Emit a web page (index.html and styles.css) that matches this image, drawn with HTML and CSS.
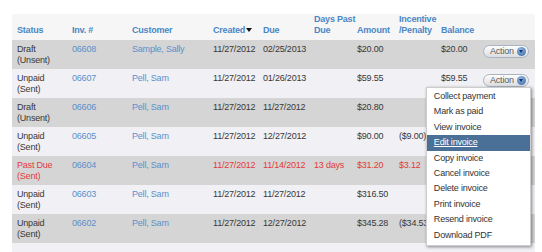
FILE: index.html
```html
<!DOCTYPE html>
<html lang="en">
<head>
    <meta charset="UTF-8">
    <meta name="viewport" content="width=device-width, initial-scale=1.0">
    <title>Invoices</title>
    <link rel="stylesheet" href="styles.css">
</head>
<body>
    <div class="page">
        <table class="invoices">
            <colgroup>
                <col style="width:55px"><col style="width:60px"><col style="width:81px"><col style="width:50px"><col style="width:51px">
                <col style="width:43px"><col style="width:42px"><col style="width:42px"><col style="width:44px"><col style="width:55px">
            </colgroup>
            <thead>
                <tr>
                    <th>Status</th>
                    <th>Inv. #</th>
                    <th>Customer</th>
                    <th>Created<span class="sort-down"></span></th>
                    <th>Due</th>
                    <th>Days Past<br>Due</th>
                    <th>Amount</th>
                    <th>Incentive<br>/Penalty</th>
                    <th>Balance</th>
                    <th></th>
                </tr>
            </thead>
            <tbody>
                <tr class="dark">
                    <td>Draft<br>(Unsent)</td>
                    <td><a href="#">06608</a></td>
                    <td><a href="#">Sample, Sally</a></td>
                    <td>11/27/2012</td>
                    <td>02/25/2013</td>
                    <td></td>
                    <td>$20.00</td>
                    <td></td>
                    <td>$20.00</td>
                    <td><span class="action"><span class="action-btn">Action <i class="caret"></i></span></span></td>
                </tr>
                <tr>
                    <td>Unpaid<br>(Sent)</td>
                    <td><a href="#">06607</a></td>
                    <td><a href="#">Pell, Sam</a></td>
                    <td>11/27/2012</td>
                    <td>01/26/2013</td>
                    <td></td>
                    <td>$59.55</td>
                    <td></td>
                    <td>$59.55</td>
                    <td>
                        <span class="action">
                            <span class="action-btn">Action <i class="caret"></i></span>
                            <ul class="menu">
                                <li><a href="#">Collect payment</a></li>
                                <li><a href="#">Mark as paid</a></li>
                                <li><a href="#">View invoice</a></li>
                                <li class="active"><a href="#">Edit invoice</a></li>
                                <li><a href="#">Copy invoice</a></li>
                                <li><a href="#">Cancel invoice</a></li>
                                <li><a href="#">Delete invoice</a></li>
                                <li><a href="#">Print invoice</a></li>
                                <li><a href="#">Resend invoice</a></li>
                                <li><a href="#">Download PDF</a></li>
                            </ul>
                        </span>
                    </td>
                </tr>
                <tr class="dark">
                    <td>Draft<br>(Unsent)</td>
                    <td><a href="#">06606</a></td>
                    <td><a href="#">Pell, Sam</a></td>
                    <td>11/27/2012</td>
                    <td>11/27/2012</td>
                    <td></td>
                    <td>$20.80</td>
                    <td></td>
                    <td></td>
                    <td></td>
                </tr>
                <tr>
                    <td>Unpaid<br>(Sent)</td>
                    <td><a href="#">06605</a></td>
                    <td><a href="#">Pell, Sam</a></td>
                    <td>11/27/2012</td>
                    <td>12/27/2012</td>
                    <td></td>
                    <td>$90.00</td>
                    <td>($9.00)</td>
                    <td></td>
                    <td></td>
                </tr>
                <tr class="dark overdue">
                    <td>Past Due<br>(Sent)</td>
                    <td><a href="#">06604</a></td>
                    <td><a href="#">Pell, Sam</a></td>
                    <td>11/27/2012</td>
                    <td>11/14/2012</td>
                    <td>13 days</td>
                    <td>$31.20</td>
                    <td>$3.12</td>
                    <td></td>
                    <td></td>
                </tr>
                <tr>
                    <td>Unpaid<br>(Sent)</td>
                    <td><a href="#">06603</a></td>
                    <td><a href="#">Pell, Sam</a></td>
                    <td>11/27/2012</td>
                    <td>11/27/2012</td>
                    <td></td>
                    <td>$316.50</td>
                    <td></td>
                    <td></td>
                    <td></td>
                </tr>
                <tr class="dark">
                    <td>Unpaid<br>(Sent)</td>
                    <td><a href="#">06602</a></td>
                    <td><a href="#">Pell, Sam</a></td>
                    <td>11/27/2012</td>
                    <td>12/27/2012</td>
                    <td></td>
                    <td>$345.28</td>
                    <td>($34.53)</td>
                    <td></td>
                    <td></td>
                </tr>
                <tr class="filler">
                    <td colspan="10"></td>
                </tr>
            </tbody>
        </table>
    </div>
</body>
</html>
```

FILE: styles.css
```css
body { margin: 0; background: #fff; font-family: "Liberation Sans", Arial, sans-serif; font-size: 9px; letter-spacing: -0.2px; color: #383838; }
.page { padding: 14px 7px 0 12px; }
.invoices { width: 523px; border-collapse: collapse; table-layout: fixed; }
.invoices th { background: #f6f6f7; color: #4a86c5; font-weight: bold; text-align: left; vertical-align: bottom; line-height: 11px; padding: 0 5px 4px; white-space: nowrap; }
.invoices td { background: #f1f0f5; line-height: 11px; padding: 4px 5px 3px; vertical-align: top; white-space: nowrap; }
.invoices tr.dark td { background: #d5d5d5; }
.invoices tr.filler td { height: 22px; }
.invoices a { color: #5a90cc; text-decoration: none; }
.overdue td { color: #e23b3b; }
.sort-down { display: inline-block; margin-left: 1px; border-left: 3px solid transparent; border-right: 3px solid transparent; border-top: 4px solid #111; vertical-align: 1px; }
.invoices td:last-child { padding-left: 3px; padding-right: 0; }
.action { position: relative; display: inline-block; margin-top: 1px; }
.action-btn { display: inline-flex; align-items: center; height: 11px; padding: 0 2px 0 6px; border: 1px solid #a9b3c0; border-radius: 7px; background: linear-gradient(#fdfdfd, #dcdde0); color: #5a5a5a; }
.caret { display: inline-block; position: relative; width: 9px; height: 9px; margin-left: 3px; border-radius: 50%; background: radial-gradient(circle at 40% 30%, #8fb4e0, #3a6aa8); }
.caret::after { content: ""; position: absolute; left: 2px; top: 3px; border-left: 2.5px solid transparent; border-right: 2.5px solid transparent; border-top: 3px solid #1c3560; }
.menu { position: absolute; top: 13px; right: -2px; z-index: 10; width: 103px; margin: 0; padding: 1px 0 2px; list-style: none; background: #fff; border: 1px solid #cdcdcd; box-shadow: 1px 1px 3px rgba(0, 0, 0, 0.45); }
.menu a { display: block; padding: 1px 7px; line-height: 13.4px; color: #333 !important; }
.menu li.active a { background: #4a7097; color: #fff !important; text-decoration: underline; }
```
